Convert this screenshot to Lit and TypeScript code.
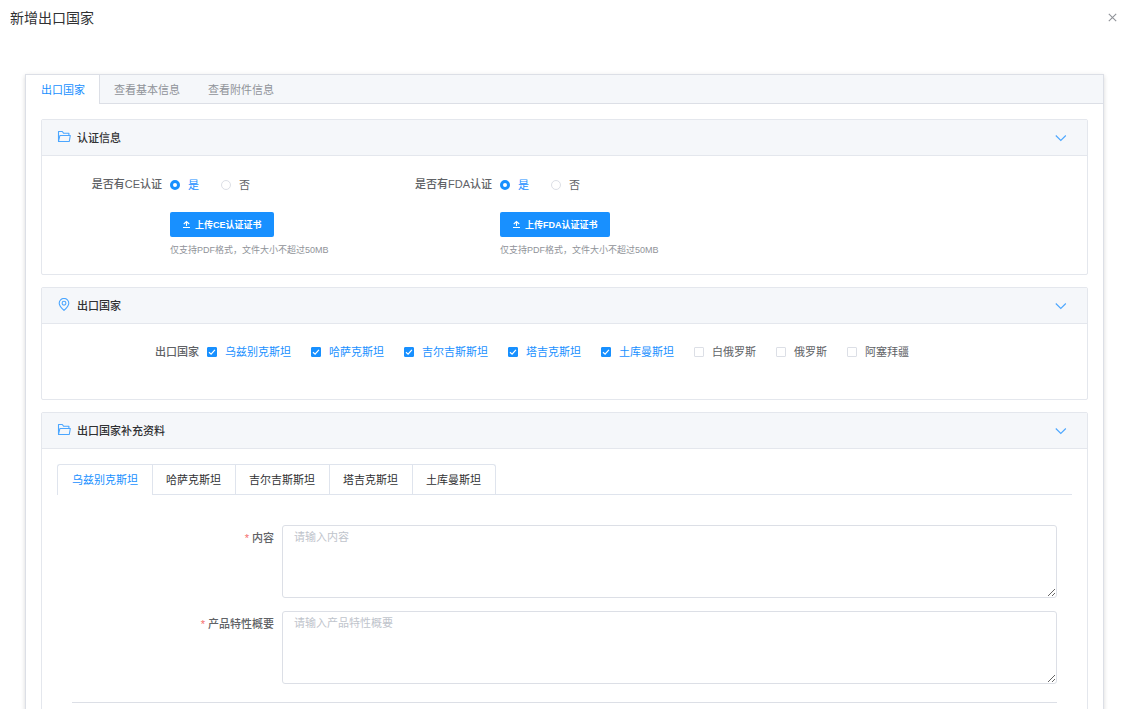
import { LitElement, html, svg, css } from "lit";
import { customElement, property, state } from "lit/decorators.js";

const folderIcon = svg`<path d="M1.500 11.500V1.500h3.800l1.400 1.800h5.200v2.200M1.500 11.500l1.400-6h10.400l-1 6z"/>`;
const pinIcon = svg`<path d="M7 12.400C4.300 9.900 2.200 7.700 2.200 5.200a4.800 4.800 0 0 1 9.600 0c0 2.500-2.100 4.700-4.800 7.200z"/><circle cx="7" cy="5.200" r="1.900"/>`;

@customElement("panel-card")
export class PanelCard extends LitElement {
  @property() heading = "";
  @property() icon = "folder";

  static styles = css`
    :host {
      display: block;
      border: 1px solid #e4e7ed;
      border-radius: 2px;
      background: #fff;
    }
    .head {
      display: flex;
      align-items: center;
      gap: 6px;
      width: 100%;
      height: 36px;
      padding: 0 20px 0 15px;
      border: 0;
      border-bottom: 1px solid #e4e7ed;
      background: #f5f7fa;
      color: #303133;
      font: inherit;
      font-weight: 500;
      text-align: left;
      cursor: pointer;
    }
    .mark {
      width: 14px;
      height: 14px;
      margin-bottom: 2px;
      fill: none;
      stroke: #4ba6ff;
      stroke-width: 1.1;
      stroke-linejoin: round;
    }
    .text {
      flex: 1;
    }
    .chevron {
      width: 12px;
      height: 8px;
      fill: none;
      stroke: #4ba6ff;
      stroke-width: 1.1;
    }
  `;

  render() {
    return html`
      <button class="head" type="button" aria-expanded="true">
        <svg class="mark" viewBox="0 0 14 14" aria-hidden="true">
          ${this.icon === "pin" ? pinIcon : folderIcon}
        </svg>
        <span class="text">${this.heading}</span>
        <svg class="chevron" viewBox="0 0 12 8" aria-hidden="true">
          <path d="M.8 1.500l5 5 5-5" />
        </svg>
      </button>
      <slot></slot>
    `;
  }
}

@customElement("app-root")
export class AppRoot extends LitElement {
  @state() private countries = [
    { name: "乌兹别克斯坦", on: true },
    { name: "哈萨克斯坦", on: true },
    { name: "吉尔吉斯斯坦", on: true },
    { name: "塔吉克斯坦", on: true },
    { name: "土库曼斯坦", on: true },
    { name: "白俄罗斯", on: false },
    { name: "俄罗斯", on: false },
    { name: "阿塞拜疆", on: false },
  ];
  @state() private current = 0;

  static styles = css`
    :host {
      display: flex;
      flex-direction: column;
      height: 100vh;
      overflow: hidden;
      background: #fff;
      color: #606266;
      font-family: "Liberation Sans", "Noto Sans CJK SC", sans-serif;
      font-size: 11px;
      line-height: 16px;
    }
    * {
      box-sizing: border-box;
    }
    button,
    input,
    textarea {
      margin: 0;
      font: inherit;
    }
    .bar {
      display: flex;
      flex: none;
      align-items: center;
      justify-content: space-between;
      padding: 8px 12px 8px 10px;
    }
    .title {
      margin: 0;
      color: #303133;
      font-size: 14px;
      font-weight: 400;
      line-height: 20px;
    }
    .close {
      display: flex;
      padding: 2px 2px 4px;
      border: 0;
      background: none;
    }
    .close svg {
      width: 9px;
      height: 9px;
      stroke: #909399;
      stroke-width: 1.1;
    }
    .sheet {
      flex: none;
      margin: 38px 27px 0 25px;
      border: 1px solid #dcdfe6;
      box-shadow: 0 2px 4px rgba(0, 0, 0, 0.12), 0 0 6px rgba(0, 0, 0, 0.04);
    }
    .tabs {
      display: flex;
      height: 29px;
      border-bottom: 1px solid #dcdfe6;
      background: #f5f7fa;
    }
    .tab {
      height: 29px;
      padding: 0 14px;
      border: 0;
      background: none;
      color: #909399;
    }
    .tab:first-child {
      padding-left: 15px;
    }
    .tab.active {
      border-right: 1px solid #dcdfe6;
      background: #fff;
      color: #1890ff;
    }
    .cards {
      display: flex;
      flex-direction: column;
      gap: 12px;
      padding: 15px;
    }
    .certs {
      display: grid;
      grid-template-columns: repeat(3, 1fr);
      padding: 20px 40px 16px 15px;
    }
    .cert {
      display: grid;
      grid-template-columns: 113px auto;
      justify-content: start;
    }
    .label {
      padding-right: 8px;
      text-align: right;
      font-weight: 500;
      white-space: nowrap;
    }
    .choices {
      display: flex;
      gap: 22px;
      padding-top: 1px;
    }
    .choice {
      display: flex;
      align-items: center;
      gap: 8px;
      white-space: nowrap;
    }
    .choice:has(:checked),
    .country:has(:checked) {
      color: #1890ff;
    }
    .radio {
      appearance: none;
      width: 10px;
      height: 10px;
      border: 1px solid #dcdfe6;
      border-radius: 50%;
      background: #fff;
    }
    .radio:checked {
      border: 3px solid #1890ff;
    }
    .upload {
      grid-column: 2;
      justify-self: start;
      display: flex;
      align-items: center;
      gap: 4px;
      height: 25px;
      margin-top: 19px;
      padding: 0 12px;
      border: 0;
      border-radius: 2px;
      background: #1890ff;
      color: #fff;
      font-size: 9px;
      font-weight: 700;
      white-space: nowrap;
    }
    .upload svg {
      width: 9px;
      height: 9px;
      fill: none;
      stroke: #fff;
      stroke-width: 1.1;
    }
    .hint {
      grid-column: 2;
      margin: 5px 0 0;
      color: #909399;
      font-size: 9px;
      white-space: nowrap;
    }
    .markets {
      display: flex;
      padding: 20px 15px 39px;
    }
    .markets .label {
      width: 150px;
      flex: none;
    }
    .countries {
      display: flex;
      flex-wrap: wrap;
      gap: 8px 20px;
    }
    .country {
      display: flex;
      align-items: center;
      gap: 8px;
      white-space: nowrap;
    }
    .check {
      appearance: none;
      width: 10px;
      height: 10px;
      border: 1px solid #dcdfe6;
      border-radius: 1px;
      background: #fff;
    }
    .check:checked {
      border-color: #1890ff;
      background: #1890ff
        url("data:image/svg+xml,%3Csvg xmlns='http://www.w3.org/2000/svg' viewBox='0 0 8 8'%3E%3Cpath d='M1 4.200L3.100 6.200 6.900 1.800' fill='none' stroke='white' stroke-width='1.200'/%3E%3C/svg%3E")
        center / 8px 8px no-repeat;
    }
    .extra {
      padding: 15px 15px 40px;
    }
    .subtabs {
      display: flex;
      height: 31px;
      border-bottom: 1px solid #dfe4ed;
    }
    .subtab {
      height: 30px;
      padding: 0 14px 0 13px;
      border: 0 solid #dfe4ed;
      border-top-width: 1px;
      border-left-width: 1px;
      background: #fff;
      color: #303133;
      white-space: nowrap;
    }
    .subtab:first-child {
      border-top-left-radius: 3px;
      padding-left: 14px;
    }
    .subtab:last-child {
      border-right-width: 1px;
      border-top-right-radius: 3px;
    }
    .subtab.active {
      height: 31px;
      color: #1890ff;
    }
    .fields {
      display: flex;
      flex-direction: column;
      gap: 13px;
      margin: 30px 15px 0;
      padding-bottom: 18px;
      border-bottom: 1px solid #dcdfe6;
    }
    .field {
      display: grid;
      grid-template-columns: 210px 1fr;
    }
    .field .label {
      padding-top: 5px;
    }
    .star {
      color: #f56c6c;
    }
    .area {
      display: block;
      width: 100%;
      height: 73px;
      padding: 3px 11px;
      border: 1px solid #dcdfe6;
      border-radius: 3px;
      background: #fff;
      color: #606266;
      resize: vertical;
    }
    .area::placeholder {
      color: #c0c4cc;
    }
  `;

  private toggle(i: number) {
    this.countries = this.countries.map((c, n) => (n === i ? { ...c, on: !c.on } : c));
  }

  private cert(code: string) {
    return html`
      <div class="cert" role="radiogroup" aria-labelledby="label-${code}">
        <span class="label" id="label-${code}">是否有${code}认证</span>
        <div class="choices">
          <label class="choice"><input class="radio" type="radio" name=${code} checked />是</label>
          <label class="choice"><input class="radio" type="radio" name=${code} />否</label>
        </div>
        <button class="upload" type="button">
          <svg viewBox="0 0 9 9" aria-hidden="true"><path d="M1 7.500h7M4.500 6V1.500M1.800 4l2.700-2.500L7.200 4" /></svg>
          上传${code}认证证书
        </button>
        <p class="hint">仅支持PDF格式，文件大小不超过50MB</p>
      </div>
    `;
  }

  private field(id: string, name: string) {
    return html`
      <div class="field">
        <label class="label" for=${id}><span class="star">*</span> ${name}</label>
        <textarea class="area" id=${id} placeholder="请输入${name}"></textarea>
      </div>
    `;
  }

  render() {
    const chosen = this.countries.filter((c) => c.on);
    return html`
      <header class="bar">
        <h1 class="title">新增出口国家</h1>
        <button class="close" type="button" aria-label="关闭">
          <svg viewBox="0 0 9 9"><path d="M.8.8l7.400 7.400M8.200.8L.8 8.200" /></svg>
        </button>
      </header>
      <main class="sheet">
        <nav class="tabs" role="tablist">
          <button class="tab active" role="tab" aria-selected="true">出口国家</button>
          <button class="tab" role="tab" aria-selected="false">查看基本信息</button>
          <button class="tab" role="tab" aria-selected="false">查看附件信息</button>
        </nav>
        <div class="cards">
          <panel-card heading="认证信息">
            <div class="certs">${this.cert("CE")}${this.cert("FDA")}</div>
          </panel-card>
          <panel-card heading="出口国家" icon="pin">
            <div class="markets" role="group" aria-labelledby="markets-label">
              <span class="label" id="markets-label">出口国家</span>
              <div class="countries">
                ${this.countries.map(
                  (c, i) => html`<label class="country"
                    ><input
                      class="check"
                      type="checkbox"
                      .checked=${c.on}
                      @change=${() => this.toggle(i)}
                    />${c.name}</label
                  >`
                )}
              </div>
            </div>
          </panel-card>
          <panel-card heading="出口国家补充资料">
            <div class="extra">
              <div class="subtabs" role="tablist">
                ${chosen.map(
                  (c, i) => html`<button
                    class="subtab ${i === this.current ? "active" : ""}"
                    role="tab"
                    aria-selected=${i === this.current}
                    @click=${() => (this.current = i)}
                  >
                    ${c.name}
                  </button>`
                )}
              </div>
              <div class="fields">
                ${this.field("content", "内容")} ${this.field("summary", "产品特性概要")}
              </div>
            </div>
          </panel-card>
        </div>
      </main>
    `;
  }
}
